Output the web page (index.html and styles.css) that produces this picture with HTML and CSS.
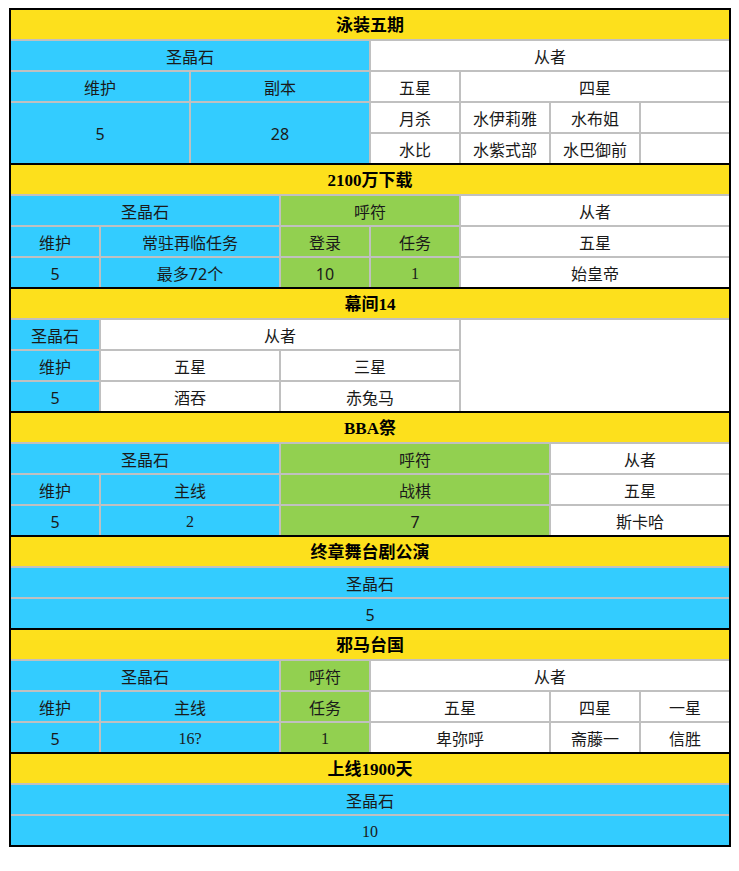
FILE: index.html
```html
<!DOCTYPE html>
<html lang="zh-CN">
<head>
<meta charset="utf-8">
<title>活动奖励</title>
<link rel="stylesheet" href="styles.css">
</head>
<body>
<div class="board">
  <section class="sec">
    <div class="cell y s8 title">泳装五期</div>
    <div class="cell b s4">圣晶石</div>
    <div class="cell w s4">从者</div>
    <div class="cell b s2">维护</div>
    <div class="cell b s2">副本</div>
    <div class="cell w">五星</div>
    <div class="cell w s3">四星</div>
    <div class="cell b s2 r2">5</div>
    <div class="cell b s2 r2">28</div>
    <div class="cell w">月杀</div>
    <div class="cell w">水伊莉雅</div>
    <div class="cell w">水布姐</div>
    <div class="cell w"></div>
    <div class="cell w">水比</div>
    <div class="cell w">水紫式部</div>
    <div class="cell w">水巴御前</div>
    <div class="cell w"></div>
  </section>
  <section class="sec">
    <div class="cell y s8 title">2100万下载</div>
    <div class="cell b s3">圣晶石</div>
    <div class="cell g s2">呼符</div>
    <div class="cell w s3">从者</div>
    <div class="cell b">维护</div>
    <div class="cell b s2">常驻再临任务</div>
    <div class="cell g">登录</div>
    <div class="cell g">任务</div>
    <div class="cell w s3">五星</div>
    <div class="cell b">5</div>
    <div class="cell b s2">最多72个</div>
    <div class="cell g">10</div>
    <div class="cell g serif">1</div>
    <div class="cell w s3">始皇帝</div>
  </section>
  <section class="sec">
    <div class="cell y s8 title">幕间14</div>
    <div class="cell b">圣晶石</div>
    <div class="cell w s4">从者</div>
    <div class="cell w s3 r3"></div>
    <div class="cell b">维护</div>
    <div class="cell w s2">五星</div>
    <div class="cell w s2">三星</div>
    <div class="cell b">5</div>
    <div class="cell w s2">酒吞</div>
    <div class="cell w s2">赤兔马</div>
  </section>
  <section class="sec">
    <div class="cell y s8 title">BBA祭</div>
    <div class="cell b s3">圣晶石</div>
    <div class="cell g s3">呼符</div>
    <div class="cell w s2">从者</div>
    <div class="cell b">维护</div>
    <div class="cell b s2">主线</div>
    <div class="cell g s3">战棋</div>
    <div class="cell w s2">五星</div>
    <div class="cell b">5</div>
    <div class="cell b s2 serif">2</div>
    <div class="cell g s3">7</div>
    <div class="cell w s2">斯卡哈</div>
  </section>
  <section class="sec">
    <div class="cell y s8 title">终章舞台剧公演</div>
    <div class="cell b s8">圣晶石</div>
    <div class="cell b s8">5</div>
  </section>
  <section class="sec">
    <div class="cell y s8 title">邪马台国</div>
    <div class="cell b s3">圣晶石</div>
    <div class="cell g">呼符</div>
    <div class="cell w s4">从者</div>
    <div class="cell b">维护</div>
    <div class="cell b s2">主线</div>
    <div class="cell g">任务</div>
    <div class="cell w s2">五星</div>
    <div class="cell w">四星</div>
    <div class="cell w">一星</div>
    <div class="cell b">5</div>
    <div class="cell b s2 serif">16?</div>
    <div class="cell g serif">1</div>
    <div class="cell w s2">卑弥呼</div>
    <div class="cell w">斋藤一</div>
    <div class="cell w">信胜</div>
  </section>
  <section class="sec">
    <div class="cell y s8 title">上线1900天</div>
    <div class="cell b s8">圣晶石</div>
    <div class="cell b s8 serif">10</div>
  </section>
</div>
</body>
</html>
```

FILE: styles.css
```css
html, body {
  background: #ffffff;
}
body {
  margin: 8px 8px 8px 9px;
  font-family: "Noto Sans", "Noto Sans CJK SC", sans-serif;
  font-size: 16px;
  color: #1a1a1a;
}
.board {
  width: 718px;
  border: 2px solid #000000;
  background: #000000;
  display: flex;
  flex-direction: column;
  gap: 2px;
}
.sec {
  display: grid;
  grid-template-columns: repeat(8, 88px);
  grid-auto-rows: 29px;
  gap: 2px;
  background: #c0c0c0;
}
.cell {
  display: flex;
  align-items: center;
  justify-content: center;
  line-height: 1;
  padding-top: 2px;
  box-sizing: border-box;
  white-space: nowrap;
}
.y { background: #fde01c; }
.b { background: #33ccff; }
.g { background: #92d050; }
.w { background: #ffffff; }
.title {
  font-family: "Liberation Serif", "Noto Sans CJK SC", serif;
  font-weight: bold;
  font-size: 17px;
  color: #000000;
}
.serif {
  font-family: "Liberation Serif", "Noto Sans CJK SC", serif;
}
.s2 { grid-column: span 2; }
.s3 { grid-column: span 3; }
.s4 { grid-column: span 4; }
.s8 { grid-column: span 8; }
.r2 { grid-row: span 2; }
.r3 { grid-row: span 3; }
```
